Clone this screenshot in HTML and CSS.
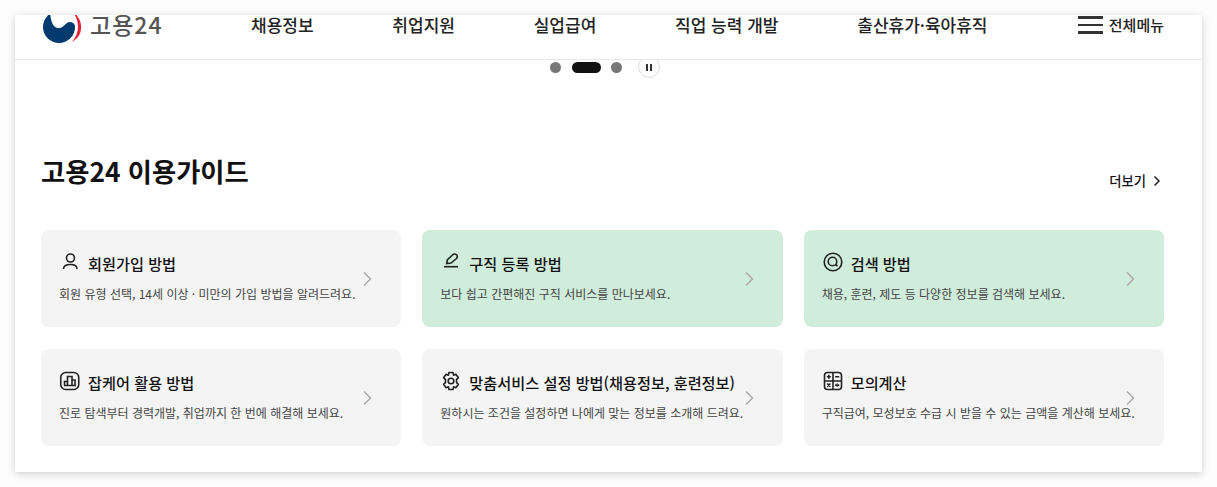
FILE: index.html
```html
<!DOCTYPE html>
<html lang="ko">
<head>
  <meta charset="UTF-8">
  <meta name="viewport" content="width=device-width, initial-scale=1.0">
  <title>고용24 이용가이드</title>
  <link rel="stylesheet" href="styles.css">
</head>
<body>
  <div class="panel">
    <header class="header">
      <a class="logo" href="#">
        <svg class="logo-mark" width="42" height="40" viewBox="0 0 42 40">
          <circle cx="18" cy="22" r="16" fill="#003a6f"/>
          <path d="M9 4C9 18 13 24 19 23C23 22 25 17 29 17C32 17 34 19 35 23L38 4Z" fill="#fff"/>
          <path d="M31 6C37 10 41 17 40 24C39.500 30 36 34 31 37C35 32 37 27 37 22C37 16 35 11 31 6Z" fill="#e2233b"/>
        </svg>
        <span class="logo-text">고용24</span>
      </a>
      <nav class="nav">
        <a href="#">채용정보</a>
        <a href="#">취업지원</a>
        <a href="#">실업급여</a>
        <a href="#">직업 능력 개발</a>
        <a href="#">출산휴가·육아휴직</a>
      </nav>
      <a class="all-menu" href="#">
        <span class="burger"><i></i><i></i><i></i></span>
        전체메뉴
      </a>
    </header>

    <div class="pager">
      <span class="pager-dot"></span>
      <span class="pager-dot active"></span>
      <span class="pager-dot"></span>
      <button class="pager-pause" type="button" aria-label="일시정지"><i></i><i></i></button>
    </div>

    <section class="guide">
      <div class="guide-head">
        <h2>고용24 이용가이드</h2>
        <a class="more" href="#">더보기
          <svg width="8" height="12" viewBox="0 0 8 12"><path d="M1.500 1.500L6 6L1.500 10.500" fill="none" stroke="#222" stroke-width="1.500"/></svg>
        </a>
      </div>

      <div class="cards">
        <a class="card" href="#">
          <div class="card-body">
            <div class="card-title">
              <svg class="icon" width="21" height="20" viewBox="0 0 21 20"><circle cx="11.500" cy="6" r="4"/><path d="M4.500 17C4.500 14 7 12.500 11.500 12.500C16 12.500 18 14 18 17"/></svg>
              <strong>회원가입 방법</strong>
            </div>
            <p>회원 유형 선택, 14세 이상 · 미만의 가입 방법을 알려드려요.</p>
          </div>
          <svg class="chevron" width="10" height="16" viewBox="0 0 10 16"><path d="M2 1.500L8.500 8L2 14.500"/></svg>
        </a>

        <a class="card green" href="#">
          <div class="card-body">
            <div class="card-title">
              <svg class="icon" width="21" height="20" viewBox="0 0 21 20"><path d="M6.700 11.500L7.300 8L12.500 3C13.700 1.800 15.500 1.800 16.500 2.800C17.500 3.800 17.500 5.300 16.500 6.500L11 11Z"/><path d="M4 14.700H18"/></svg>
              <strong>구직 등록 방법</strong>
            </div>
            <p>보다 쉽고 간편해진 구직 서비스를 만나보세요.</p>
          </div>
          <svg class="chevron" width="10" height="16" viewBox="0 0 10 16"><path d="M2 1.500L8.500 8L2 14.500"/></svg>
        </a>

        <a class="card green" href="#">
          <div class="card-body">
            <div class="card-title">
              <svg class="icon" width="21" height="20" viewBox="0 0 21 20"><circle cx="11" cy="10" r="8.800"/><circle cx="10.500" cy="9.500" r="4.300"/><path d="M13.500 12.500L15.500 14"/></svg>
              <strong>검색 방법</strong>
            </div>
            <p>채용, 훈련, 제도 등 다양한 정보를 검색해 보세요.</p>
          </div>
          <svg class="chevron" width="10" height="16" viewBox="0 0 10 16"><path d="M2 1.500L8.500 8L2 14.500"/></svg>
        </a>

        <a class="card" href="#">
          <div class="card-body">
            <div class="card-title">
              <svg class="icon" width="21" height="20" viewBox="0 0 21 20"><rect x="1.750" y="1.500" width="18" height="17" rx="5"/><path d="M5.500 14.500V10.500H8.500M8.500 14.500V5.500H13V14.500M13 9H16V14.500M5 14.500H17"/></svg>
              <strong>잡케어 활용 방법</strong>
            </div>
            <p>진로 탐색부터 경력개발, 취업까지 한 번에 해결해 보세요.</p>
          </div>
          <svg class="chevron" width="10" height="16" viewBox="0 0 10 16"><path d="M2 1.500L8.500 8L2 14.500"/></svg>
        </a>

        <a class="card" href="#">
          <div class="card-body">
            <div class="card-title">
              <svg class="icon" width="21" height="20" viewBox="0 0 21 20"><path d="M9 1.500H13L13.600 4.200L15.800 3.300L18.300 6.600L16.500 8.600V11.400L18.300 13.400L15.800 16.700L13.600 15.800L13 18.500H9L8.400 15.800L6.200 16.700L3.700 13.400L5.500 11.400V8.600L3.700 6.600L6.200 3.300L8.400 4.200Z" stroke-linejoin="round"/><circle cx="11" cy="10" r="2.800"/></svg>
              <strong>맞춤서비스 설정 방법(채용정보, 훈련정보)</strong>
            </div>
            <p>원하시는 조건을 설정하면 나에게 맞는 정보를 소개해 드려요.</p>
          </div>
          <svg class="chevron" width="10" height="16" viewBox="0 0 10 16"><path d="M2 1.500L8.500 8L2 14.500"/></svg>
        </a>

        <a class="card" href="#">
          <div class="card-body">
            <div class="card-title">
              <svg class="icon" width="21" height="20" viewBox="0 0 21 20"><rect x="2.500" y="1.500" width="17" height="17" rx="3"/><path d="M2.500 10H19.500M11 1.500V18.500M4.800 5.800H8.800M6.800 3.800V7.800M13.200 5.800H17.200M5.200 12.500L8.400 15.700M8.400 12.500L5.200 15.700M13.200 14.100H17.200M15.200 12.300V12.800M15.200 15.400V15.900"/></svg>
              <strong>모의계산</strong>
            </div>
            <p>구직급여, 모성보호 수급 시 받을 수 있는 금액을 계산해 보세요.</p>
          </div>
          <svg class="chevron" width="10" height="16" viewBox="0 0 10 16"><path d="M2 1.500L8.500 8L2 14.500"/></svg>
        </a>
      </div>
    </section>
  </div>
</body>
</html>
```

FILE: styles.css
```css
* {
  box-sizing: border-box;
}

html, body {
  height: 100%;
}

body {
  margin: 0;
  padding: 15px;
  background-color: #fdfdfd;
  color: #111;
  font-family: "Noto Sans CJK KR", "Noto Sans", sans-serif;
  overflow: hidden;
}

a {
  color: inherit;
  text-decoration: none;
}

.panel {
  width: 1187px;
  height: 457px;
  background-color: #fff;
  box-shadow: 0 2px 8px rgba(0, 0, 0, 0.18);
  overflow: hidden;
}

.header {
  position: relative;
  z-index: 1;
  display: flex;
  height: 45px;
  padding: 0 38px 0 26px;
  background-color: #fff;
  border-bottom: 1px solid #e8e8e8;
}

.logo {
  display: flex;
  align-items: flex-start;
  width: 210px;
  margin-top: -10px;
  flex: none;
}

.logo-mark {
  flex: none;
}

.logo-text {
  margin: 2px 0 0 7px;
  font-size: 23px;
  line-height: 34px;
  font-weight: 500;
  letter-spacing: 1px;
  color: #555;
}

.nav {
  display: flex;
  gap: 78.8px;
  font-size: 17px;
  font-weight: 500;
  line-height: 20px;
  color: #222;
  flex: 1;
}

.all-menu {
  display: flex;
  align-items: flex-start;
  gap: 6px;
  font-size: 15px;
  font-weight: 500;
  line-height: 20px;
  color: #222;
}

.burger {
  display: flex;
  flex-direction: column;
  gap: 5px;
  width: 25px;
  margin-top: 1px;
}

.burger i {
  display: block;
  height: 2.5px;
  background-color: #333;
}

.pager {
  display: flex;
  align-items: center;
  height: 22px;
  margin-top: -4px;
  padding-left: 535px;
}

.pager-dot {
  width: 11px;
  height: 11px;
  margin-right: 11px;
  border-radius: 6px;
  background-color: #777;
}

.pager-dot.active {
  width: 29px;
  margin-right: 10px;
  background-color: #111;
}

.pager-pause {
  display: flex;
  align-items: center;
  justify-content: center;
  gap: 2px;
  width: 22px;
  height: 22px;
  margin-left: 5px;
  padding: 0;
  background-color: #fff;
  border: 1px solid #ddd;
  border-radius: 50%;
}

.pager-pause i {
  width: 2px;
  height: 7px;
  background-color: #333;
}

.guide {
  padding: 0 38px 0 26px;
}

.guide-head {
  display: flex;
  align-items: flex-end;
  justify-content: space-between;
  height: 58px;
  margin-top: 64px;
}

.guide-head h2 {
  margin: 0 0 9px;
  font-size: 26.3px;
  line-height: 40px;
  font-weight: 700;
  color: #111;
}

.more {
  display: flex;
  align-items: center;
  gap: 7px;
  margin-bottom: 9px;
  padding-right: 3px;
  font-size: 13.3px;
  font-weight: 500;
  line-height: 20px;
  color: #111;
}

.cards {
  display: grid;
  grid-template-columns: repeat(3, minmax(0, 1fr));
  gap: 22px 21px;
  margin-top: 30px;
}

.card {
  display: flex;
  align-items: center;
  height: 97px;
  padding: 0 29px 0 18px;
  background-color: #f4f4f4;
  border-radius: 8px;
}

.card.green {
  background-color: #d0ecdb;
}

.card-body {
  flex: 1;
  min-width: 0;
  padding-bottom: 3px;
  white-space: nowrap;
}

.card-title {
  display: flex;
  align-items: center;
  gap: 8px;
  height: 24px;
}

.card-title strong {
  font-size: 15.2px;
  font-weight: 500;
  line-height: 24px;
  color: #111;
}

.card p {
  margin: 9px 0 0;
  font-size: 12px;
  line-height: 20px;
  color: #444;
}

.icon {
  flex: none;
  margin-top: -2px;
  fill: none;
  stroke: #222;
  stroke-width: 1.6;
}

.chevron {
  flex: none;
  fill: none;
  stroke: #aaa;
  stroke-width: 1.5;
}
```
